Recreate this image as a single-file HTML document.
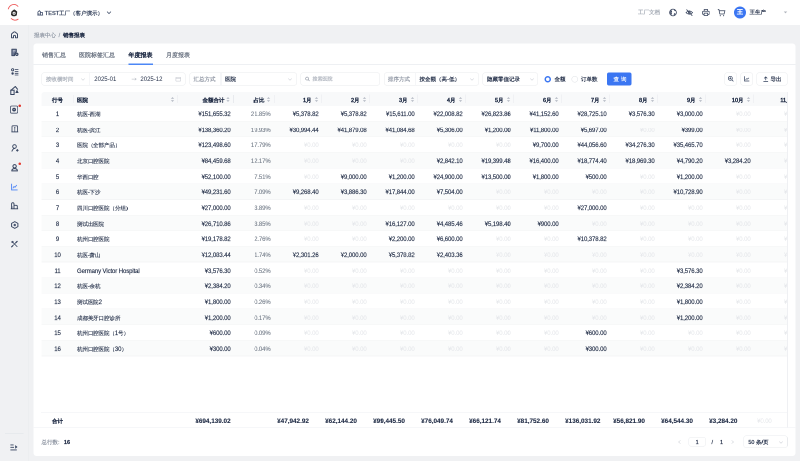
<!DOCTYPE html><html><head><meta charset="utf-8"><style>*{box-sizing:border-box}
html,body{margin:0;padding:0}
body{position:relative;background:#f0f1f3;font-family:"Liberation Sans",sans-serif;color:#1f2b45}
.abs{position:absolute}
.t{position:absolute;white-space:nowrap;line-height:20px;font-size:11.5px}
.t.c{transform:translateX(-50%)}
.hd{font-weight:bold;color:#25314a}
.dk{color:#1f2b45}
.gy{color:#9098a5}
.zr{color:#d9dde3}
.sm{font-weight:bold;color:#1f2b45}
.sort{position:absolute}
.sep{position:absolute;width:1.2px;background:#e8eaee}
.tbl{position:absolute;left:0;top:0;width:1574px;height:922px;overflow:hidden}
.th{position:absolute;left:82.8px;width:1520px;background:#f8f9fa;border-radius:6px 0 0 0}
.rowbg{position:absolute;left:82.8px;width:1520px;background:#fafbfb}
.hl{position:absolute;height:1.2px;background:#eceef2}
.vl{position:absolute;width:1.2px;background:#eff0f3}
.hdr{position:absolute;left:0;top:0;width:1600px;height:50px;background:#fff}
.side{position:absolute;left:0;top:50px;width:57px;height:872px;border-right:1.2px solid #e9eaed}
.card{position:absolute;left:67.2px;top:86.6px;width:1524px;height:825px;background:#fff;border-radius:6px}
.tab{position:absolute;top:100px;font-size:12.2px;line-height:20px;color:#5f6878;white-space:nowrap}
.tab.on{color:#1f2b45}
.box{position:absolute;border:1.2px solid #e9ebee;border-radius:5px;background:#fff}
.ft{position:absolute;white-space:nowrap;line-height:20px;font-size:11.8px}
.t .cj{font-size:10.7px;-webkit-text-stroke:0.24px currentColor}
.hd .cj, .sm .cj{font-size:10.6px}
.t.hd{font-size:11px}
.t.dk{-webkit-text-stroke:0.28px #1f2b45}
.tab,.ft{-webkit-text-stroke:0.4px currentColor}
.t.sm{font-size:12.7px;-webkit-text-stroke:0.2px #1f2b45}
.t.sm .cj{font-size:11.2px}
.t.gy{color:#78808d}
.t.zr{color:#dde0e5}

.rowln{position:absolute;left:82.8px;width:1520px;height:1.4px;background:#f4f5f6}
.t.dk,.t.gy,.t.zr{font-size:12px;letter-spacing:-0.2px}
.t.dk .cj{letter-spacing:0}
.t.zr{color:#e3e5e9}

.t.hd{font-weight:normal;-webkit-text-stroke:0.84px #222e47;color:#222e47}
.t.hd .cj{-webkit-text-stroke:0.8px #222e47}
.t.dk .cj{letter-spacing:-0.18px}

.tab.on{-webkit-text-stroke:0.84px #1f2b45}
.t.gy{-webkit-text-stroke:0.24px #78808d}
html,body{width:800px;height:461px;overflow:hidden}#root{will-change:transform;position:absolute;left:0;top:0;width:1600px;height:922px;transform:scale(0.5);transform-origin:0 0;overflow:hidden}</style></head><body><div id="root">
<div class="hdr">
  <!-- logo -->
  <svg class="abs" style="left:8px;top:4px" width="40" height="40" viewBox="0 0 20 20">
    <path d="M4.2 7.2 A6 7 0 0 1 14.2 4.6" fill="none" stroke="#ef5b5b" stroke-width="0.9"/>
    <path d="M14.4 17 A6 7 0 0 1 7 16.3" fill="none" stroke="#ef5b5b" stroke-width="0.9"/>
    <path d="M7.3 9.8 L9 8.2 L10.2 7.4 L11.6 8.3 L13.2 9.6 L12.8 13.4 L11 14.2 L8.8 14.2 L7 13 Z" fill="#2a2a2a"/>
    <circle cx="10.1" cy="11.2" r="1.5" fill="#fff"/>
    <circle cx="10.1" cy="11.2" r="0.6" fill="#2a2a2a"/>
  </svg>
  <svg class="abs" style="left:74px;top:19.6px" width="13" height="11" viewBox="0 0 6.5 5.5"><path d="M0.4 5.1 H6.1 M0.9 5.1 V2 L2.4 0.6 L3.4 1.6 V5.1 M3.4 2.6 H5.6 V5.1 M2 3.2 V5" fill="none" stroke="#3a4866" stroke-width="0.75"/></svg>
  <div class="ft" style="left:89.6px;top:16px;font-size:11.2px;color:#2c3a55">TEST工厂（客户演示）</div>
  <svg class="abs" style="left:213px;top:21.6px" width="10" height="7" viewBox="0 0 5 3.5"><path d="M0.6 0.6 L2.5 2.6 L4.4 0.6" fill="none" stroke="#3c4a66" stroke-width="0.8"/></svg>

  <div class="ft" style="left:1276px;top:14px;font-size:11.2px;color:#a6acb6">工厂文档</div>
  <!-- globe -->
  <svg class="abs" style="left:1338.4px;top:17.2px" width="16" height="16" viewBox="0 0 8 8"><circle cx="4" cy="4" r="3.4" fill="none" stroke="#34405a" stroke-width="0.75"/><path d="M1.8 1.8 Q3.2 2 3 3 Q2.3 3.5 2.7 4.5 Q3.1 5.3 2.6 6.4 L1.3 5.2 Q0.9 3.4 1.8 1.8Z M4.9 1 L5.3 2.2 L6.9 2.6 Q6.4 1.4 4.9 1Z M5.2 4.8 Q6 4.7 6.5 5.3 Q5.8 6.3 4.8 6.7 Q4.7 5.6 5.2 4.8Z" fill="#34405a"/></svg>
  <!-- eye slash -->
  <svg class="abs" style="left:1371.2px;top:17.6px" width="15.2" height="14.4" viewBox="0 0 7.6 7.2"><path d="M0.5 3.6 Q3.8 0.2 7.1 3.6 Q3.8 7 0.5 3.6Z" fill="none" stroke="#34405a" stroke-width="0.7"/><circle cx="3.8" cy="3.6" r="1" fill="none" stroke="#34405a" stroke-width="0.65"/><path d="M1 0.5 L6.8 6.8" stroke="#34405a" stroke-width="0.8"/></svg>
  <!-- printer -->
  <svg class="abs" style="left:1403.6px;top:17.6px" width="15.6" height="14" viewBox="0 0 7.8 7"><path d="M2.2 2.2 V0.5 H5.6 V2.2 M1.9 5.4 H1.2 Q0.5 5.4 0.5 4.6 V3 Q0.5 2.2 1.4 2.2 H6.4 Q7.3 2.2 7.3 3 V4.6 Q7.3 5.4 6.6 5.4 H5.9 M2.1 4.1 H5.7 V6.5 H2.1Z" fill="none" stroke="#34405a" stroke-width="0.75"/></svg>
  <!-- cart -->
  <svg class="abs" style="left:1435.2px;top:17.6px" width="16" height="15.2" viewBox="0 0 8 7.6"><path d="M0.3 0.5 H1.4 L2.3 5 H6.6 L7.4 1.8 H1.8" fill="none" stroke="#34405a" stroke-width="0.75"/><circle cx="2.8" cy="6.7" r="0.55" fill="#34405a"/><circle cx="6.1" cy="6.7" r="0.55" fill="#34405a"/></svg>
  <div class="abs" style="left:1468px;top:12.8px;width:24px;height:24px;border-radius:50%;background:#3b76f2"></div>
  <div class="ft" style="left:1474px;top:14px;font-size:12px;color:#fff;font-weight:bold">王</div>
  <div class="ft" style="left:1499.2px;top:14px;font-size:11.2px;color:#25314a;-webkit-text-stroke:0.44px #25314a">王生产</div>
  <svg class="abs" style="left:1567px;top:22.4px" width="8" height="6" viewBox="0 0 4 3"><path d="M0.3 0.5 L2 2.4 L3.7 0.5Z" fill="#b0b5bd"/></svg>
</div>

<div class="side">
</div>
<!-- sidebar icons -->
<svg class="abs" style="left:20.6px;top:61.8px" width="16" height="16" viewBox="0 0 8 8"><path d="M1 6.8 V3.4 Q1 2.9 1.5 2.5 L3.4 1 Q4 0.6 4.6 1 L6.5 2.5 Q7 2.9 7 3.4 V6.8 H5 V5.4 Q5 4.3 4 4.3 Q3 4.3 3 5.4 V6.8Z" fill="none" stroke="#34425e" stroke-width="0.95" stroke-linejoin="round"/></svg>
<svg class="abs" style="left:21.6px;top:97px" width="16" height="16" viewBox="0 0 8 8"><path d="M0.8 0.6 H5.4 V3.6 Q3.4 4.2 3.6 7.2 H0.8Z" fill="#6b7690" stroke="#34425e" stroke-width="0.8" stroke-linejoin="round"/><path d="M1.9 2 H4.3 M1.9 3.4 H3.6" stroke="#e8eaef" stroke-width="0.55"/><circle cx="5.8" cy="5.8" r="1.7" fill="#34425e"/><circle cx="5.8" cy="5.8" r="0.55" fill="#eef0f3"/></svg>
<svg class="abs" style="left:21.6px;top:135.6px" width="16" height="16" viewBox="0 0 8 8"><circle cx="1.6" cy="1.8" r="1.1" fill="none" stroke="#34425e" stroke-width="0.9"/><circle cx="1.6" cy="5.5" r="1.2" fill="#34425e"/><path d="M3.8 1.5 H7.4 M3.8 3.5 H7.4 M3.8 5.3 H7.4 M3.8 7 H7.4" stroke="#34425e" stroke-width="0.8"/></svg>
<svg class="abs" style="left:20px;top:172px" width="20" height="18" viewBox="0 0 10 9"><rect x="0.8" y="4.2" width="3.3" height="4.3" fill="none" stroke="#34425e" stroke-width="1"/><path d="M0.6 4.6 L5.3 0.5 L7.8 3.6" fill="none" stroke="#34425e" stroke-width="1" stroke-linejoin="round"/><path d="M5.3 7 L7 3.6 L8.7 7Z" fill="#34425e"/></svg>
<svg class="abs" style="left:20px;top:211.2px" width="16.4" height="16.4" viewBox="0 0 8.2 8.2"><rect x="0.5" y="0.5" width="7.2" height="7.2" rx="1.2" fill="none" stroke="#4a566e" stroke-width="0.85"/><circle cx="4.1" cy="4.1" r="1.9" fill="#3a4660"/><path d="M3.3 4.1 H4.9" stroke="#dfe2e8" stroke-width="0.5"/></svg>
<div class="abs" style="left:37px;top:209.2px;width:5.2px;height:5.2px;border-radius:50%;background:#e0352b"></div>
<svg class="abs" style="left:21.6px;top:249.6px" width="15.2" height="15.2" viewBox="0 0 7.6 7.6"><path d="M1 6.9 V1.6 Q1 0.8 1.8 0.8 H5.8 Q6.6 0.8 6.6 1.6 V6.9" fill="none" stroke="#3a4660" stroke-width="0.85"/><path d="M0.4 6.9 H7.2" stroke="#34425e" stroke-width="0.9"/><path d="M3.8 2.2 V6.6" stroke="#4a566e" stroke-width="0.75"/><circle cx="3.8" cy="2.6" r="0.6" fill="#34425e"/></svg>
<svg class="abs" style="left:22px;top:288px" width="16" height="16" viewBox="0 0 8 8"><circle cx="3.5" cy="2.5" r="1.8" fill="none" stroke="#34425e" stroke-width="0.9"/><path d="M0.8 7.5 Q1.8 4.5 4 4.3" fill="none" stroke="#34425e" stroke-width="0.9"/><path d="M5 6.3 H7.6 M6.3 5 V7.6" stroke="#34425e" stroke-width="0.9"/></svg>
<svg class="abs" style="left:22px;top:328px" width="16" height="16" viewBox="0 0 8 8"><circle cx="3.6" cy="2.3" r="1.7" fill="none" stroke="#34425e" stroke-width="0.95"/><path d="M0.8 6.9 Q0.8 4.6 3.6 4.6 Q6.4 4.6 6.4 6.9Z" fill="none" stroke="#34425e" stroke-width="0.95"/></svg>
<div class="abs" style="left:37.4px;top:324.8px;width:5px;height:5px;border-radius:50%;background:#e5392f"></div>
<svg class="abs" style="left:21.6px;top:367px" width="14" height="14" viewBox="0 0 7 7"><path d="M0.6 0.3 V6.4 H6.6" fill="none" stroke="#4a82f5" stroke-width="0.9"/><path d="M1.8 4.8 L3 3 L4 3.8 L5.8 1.5" fill="none" stroke="#4a82f5" stroke-width="0.8"/></svg>
<svg class="abs" style="left:21.2px;top:404px" width="16" height="15" viewBox="0 0 8 7.5"><path d="M0.3 6.8 H7.6" stroke="#34425e" stroke-width="0.9"/><path d="M1.1 6.8 V2 Q1.1 0.7 2.3 0.7 Q3.5 0.7 3.5 2 V6.8 M3.5 3.3 H5.8 Q6.8 3.3 6.8 4.3 V6.8" fill="none" stroke="#34425e" stroke-width="0.9"/><path d="M2.3 4.2 V6.4" stroke="#6b7690" stroke-width="0.5"/></svg>
<svg class="abs" style="left:21.6px;top:442px" width="15" height="16" viewBox="0 0 7.5 8"><path d="M3.75 0.6 L6.9 2.4 V5.6 L3.75 7.4 L0.6 5.6 V2.4Z" fill="none" stroke="#34425e" stroke-width="0.95" stroke-linejoin="round"/><circle cx="3.75" cy="4" r="1.25" fill="#5d6880"/><circle cx="3.75" cy="4" r="0.6" fill="#34425e"/></svg>
<svg class="abs" style="left:21px;top:480px" width="16" height="16" viewBox="0 0 8 8"><path d="M1.3 6.7 L6.6 1.4" stroke="#34425e" stroke-width="0.6"/><path d="M5.3 2.7 L6.6 1.4" stroke="#34425e" stroke-width="1.2" stroke-linecap="round"/><path d="M1.1 6.9 L2.3 5.7" stroke="#34425e" stroke-width="1.1" stroke-linecap="round"/><path d="M2.4 2.4 L6.6 6.6" stroke="#34425e" stroke-width="0.8" stroke-linecap="round"/><circle cx="2" cy="2" r="1.15" fill="#4a5670"/></svg>
<div class="abs" style="left:10px;top:866px;width:37.2px;height:1.2px;background:#dfe2e6"></div>
<svg class="abs" style="left:20px;top:887px" width="16" height="15" viewBox="0 0 8 7.5"><path d="M0.4 1.4 H3.6 M0.4 3.8 H4 M0.4 6.4 H6.8" fill="none" stroke="#34425e" stroke-width="0.85"/><path d="M5.2 1.6 L7.5 3.5 L5.2 5.3Z" fill="#34425e"/></svg>

<div class="ft" style="left:68px;top:60px;font-size:10.8px;color:#8f97a4">报表中心</div>
<div class="ft" style="left:117.2px;top:60px;font-size:10.8px;color:#8f97a4">/</div>
<div class="ft" style="left:126px;top:60px;font-size:10.8px;color:#1f2b45;-webkit-text-stroke:0.76px #1f2b45">销售报表</div>

<div class="card"></div>
<div class="tab" style="left:83.8px">销售汇总</div>
<div class="tab" style="left:158px">医院标签汇总</div>
<div class="tab on" style="left:257px">年度报表</div>
<div class="tab" style="left:332.4px">月度报表</div>
<div class="abs" style="left:67.2px;top:128.4px;width:1524px;height:1.2px;background:#eef0f3"></div>
<div class="abs" style="left:257px;top:127.2px;width:49px;height:2.6px;background:#4c87f6"></div>

<!-- filters -->
<div class="box" style="left:83.2px;top:145.2px;width:288px;height:25.6px"></div>
<div class="abs" style="left:178.8px;top:145.2px;width:1.2px;height:25.6px;background:#eceef1"></div>
<div class="ft" style="left:92px;top:148px;font-size:10.8px;color:#a9afb9">按收横时间</div>
<svg class="abs" style="left:161.6px;top:155.6px" width="8" height="6" viewBox="0 0 4 3"><path d="M0.3 0.5 L2 2.3 L3.7 0.5" fill="none" stroke="#b5bac3" stroke-width="0.5"/></svg>
<div class="ft" style="left:188.6px;top:148px;font-size:12px;color:#1f2b45;-webkit-text-stroke:0">2025-01</div>
<svg class="abs" style="left:263.2px;top:154.8px" width="10.4" height="6.4" viewBox="0 0 5.2 3.2"><path d="M0.2 1.6 H4.8 M3.3 0.4 L4.8 1.6 L3.3 2.8" fill="none" stroke="#aab0ba" stroke-width="0.5"/></svg>
<div class="ft" style="left:280.8px;top:148px;font-size:12px;color:#1f2b45;-webkit-text-stroke:0">2025-12</div>
<svg class="abs" style="left:351px;top:153px" width="11" height="10" viewBox="0 0 5.5 5"><path d="M0.4 0.8 H5.1 V4.6 H0.4Z M0.4 1.9 H5.1" fill="none" stroke="#c0c4cc" stroke-width="0.5"/></svg>

<div class="box" style="left:378.6px;top:145.2px;width:215.4px;height:25.6px"></div>
<div class="abs" style="left:441.4px;top:145.2px;width:1.2px;height:25.6px;background:#eceef1"></div>
<div class="ft" style="left:387.4px;top:148px;font-size:10.8px;color:#8f96a3">汇总方式</div>
<div class="ft" style="left:450px;top:148px;font-size:10.8px;color:#1f2b45">医院</div>
<svg class="abs" style="left:576.4px;top:155.6px" width="8" height="6" viewBox="0 0 4 3"><path d="M0.3 0.5 L2 2.3 L3.7 0.5" fill="none" stroke="#b5bac3" stroke-width="0.5"/></svg>

<div class="box" style="left:601px;top:145.2px;width:159px;height:25.6px"></div>
<svg class="abs" style="left:610px;top:153.2px" width="10" height="10" viewBox="0 0 5 5"><circle cx="2.1" cy="2.1" r="1.5" fill="none" stroke="#8f96a3" stroke-width="0.6"/><path d="M3.2 3.2 L4.6 4.6" stroke="#8f96a3" stroke-width="0.6"/></svg>
<div class="ft" style="left:625px;top:148px;font-size:10.4px;color:#b5bac3">搜索医院</div>

<div class="box" style="left:767.8px;top:145.2px;width:190px;height:25.6px"></div>
<div class="abs" style="left:830px;top:145.2px;width:1.2px;height:25.6px;background:#eceef1"></div>
<div class="ft" style="left:776px;top:148px;font-size:10.8px;color:#8f96a3">排序方式</div>
<div class="ft" style="left:839.2px;top:148px;font-size:10.8px;color:#1f2b45">按金额（高-低）</div>
<svg class="abs" style="left:940.4px;top:155.6px" width="8" height="6" viewBox="0 0 4 3"><path d="M0.3 0.5 L2 2.3 L3.7 0.5" fill="none" stroke="#b5bac3" stroke-width="0.5"/></svg>

<div class="box" style="left:964.6px;top:145.2px;width:111.4px;height:25.6px"></div>
<div class="ft" style="left:974px;top:148px;font-size:10.8px;color:#1f2b45">隐藏零值记录</div>
<svg class="abs" style="left:1060.4px;top:155.6px" width="8" height="6" viewBox="0 0 4 3"><path d="M0.3 0.5 L2 2.3 L3.7 0.5" fill="none" stroke="#b5bac3" stroke-width="0.5"/></svg>

<div class="abs" style="left:1089.2px;top:151.7px;width:13px;height:13px;border-radius:50%;border:3.8px solid #3b76f2;background:#fff"></div>
<div class="ft" style="left:1109.2px;top:148px;font-size:10.6px;color:#1f2b45">金额</div>
<div class="abs" style="left:1143px;top:151.7px;width:13px;height:13px;border-radius:50%;border:1.2px solid #dcdfe4;background:#fff"></div>
<div class="ft" style="left:1161.8px;top:148px;font-size:10.6px;color:#1f2b45">订单数</div>
<div class="abs" style="left:1214.4px;top:145.2px;width:48.2px;height:25.4px;border-radius:4px;background:#3b76f2"></div>
<div class="ft" style="left:1227.2px;top:148px;font-size:11.4px;color:#fff;-webkit-text-stroke:0.3px #fff;letter-spacing:0.2px">查 询</div>

<div class="box" style="left:1448.8px;top:144.6px;width:25.4px;height:26.6px"></div>
<svg class="abs" style="left:1455px;top:151.2px" width="13" height="13" viewBox="0 0 6.5 6.5"><circle cx="2.8" cy="2.8" r="2" fill="none" stroke="#34425e" stroke-width="0.7"/><path d="M4.3 4.3 L5.9 5.9 M1.8 2.8 H3.8 M2.8 1.8 V3.8" stroke="#34425e" stroke-width="0.7"/></svg>
<div class="box" style="left:1480.5px;top:144.6px;width:25.7px;height:26.6px"></div>
<svg class="abs" style="left:1488px;top:152px" width="11" height="11" viewBox="0 0 5.5 5.5"><path d="M0.5 0.2 V5 H5.3" fill="none" stroke="#34425e" stroke-width="0.7"/><path d="M1.5 3.8 L2.8 2.6 L3.5 3.1 L5 1.8" fill="none" stroke="#34425e" stroke-width="0.6"/></svg>
<div class="box" style="left:1513px;top:144.6px;width:61.5px;height:26.6px"></div>
<svg class="abs" style="left:1526px;top:151.6px" width="11" height="12" viewBox="0 0 5.5 6"><path d="M2.75 4.2 V1 M1.2 2.4 L2.75 0.9 L4.3 2.4 M0.4 5.4 H5.1" fill="none" stroke="#34425e" stroke-width="0.7"/></svg>
<div class="ft" style="left:1541.2px;top:148px;font-size:10.6px;color:#1f2b45">导出</div>

<div class="tbl">
<div class="th" style="top:184px;height:28px"></div>
<div class="t c hd" style="left:115px;top:190px"><span class="cj">行号</span></div>
<div class="sep" style="left:146.2px;top:190px;height:16px"></div>
<div class="t hd" style="left:154px;top:190px"><span class="cj">医院</span></div>
<svg class="sort" style="left:340.6px;top:192px" width="8" height="12" viewBox="0 0 4 6"><path d="M0.4 2.9 L2 1.0 L3.6 2.9Z" fill="#b9bec7"/><path d="M0.4 4.1 L2 6.0 L3.6 4.1Z" fill="#b9bec7"/></svg>
<div class="sep" style="left:355px;top:190px;height:16px"></div>
<div class="t r hd" style="right:1125.4px;top:190px"><span class="cj">金额合计</span></div>
<svg class="sort" style="left:452px;top:192px" width="8" height="12" viewBox="0 0 4 6"><path d="M0.4 2.9 L2 1.0 L3.6 2.9Z" fill="#b9bec7"/><path d="M0.4 4.1 L2 6.0 L3.6 4.1Z" fill="#b9bec7"/></svg>
<div class="sep" style="left:466.4px;top:190px;height:16px"></div>
<div class="t r hd" style="right:1045.4px;top:190px"><span class="cj">占比</span></div>
<svg class="sort" style="left:532.6px;top:192px" width="8" height="12" viewBox="0 0 4 6"><path d="M0.4 2.9 L2 1.0 L3.6 2.9Z" fill="#b9bec7"/><path d="M0.4 4.1 L2 6.0 L3.6 4.1Z" fill="#b9bec7"/></svg>
<div class="sep" style="left:547.5px;top:190px;height:16px"></div>
<div class="t r hd" style="right:950.9px;top:190px">1<span class="cj">月</span></div>
<svg class="sort" style="left:628.7px;top:192px" width="8" height="12" viewBox="0 0 4 6"><path d="M0.4 2.9 L2 1.0 L3.6 2.9Z" fill="#b9bec7"/><path d="M0.4 4.1 L2 6.0 L3.6 4.1Z" fill="#b9bec7"/></svg>
<div class="sep" style="left:642.9px;top:189.4px;height:17px"></div>
<div class="t r hd" style="right:854.9px;top:190px">2<span class="cj">月</span></div>
<svg class="sort" style="left:724.7px;top:192px" width="8" height="12" viewBox="0 0 4 6"><path d="M0.4 2.9 L2 1.0 L3.6 2.9Z" fill="#b9bec7"/><path d="M0.4 4.1 L2 6.0 L3.6 4.1Z" fill="#b9bec7"/></svg>
<div class="sep" style="left:738.9px;top:189.4px;height:17px"></div>
<div class="t r hd" style="right:758.9px;top:190px">3<span class="cj">月</span></div>
<svg class="sort" style="left:820.7px;top:192px" width="8" height="12" viewBox="0 0 4 6"><path d="M0.4 2.9 L2 1.0 L3.6 2.9Z" fill="#b9bec7"/><path d="M0.4 4.1 L2 6.0 L3.6 4.1Z" fill="#b9bec7"/></svg>
<div class="sep" style="left:834.9px;top:189.4px;height:17px"></div>
<div class="t r hd" style="right:662.9px;top:190px">4<span class="cj">月</span></div>
<svg class="sort" style="left:916.7px;top:192px" width="8" height="12" viewBox="0 0 4 6"><path d="M0.4 2.9 L2 1.0 L3.6 2.9Z" fill="#b9bec7"/><path d="M0.4 4.1 L2 6.0 L3.6 4.1Z" fill="#b9bec7"/></svg>
<div class="sep" style="left:930.9px;top:189.4px;height:17px"></div>
<div class="t r hd" style="right:566.9px;top:190px">5<span class="cj">月</span></div>
<svg class="sort" style="left:1012.7px;top:192px" width="8" height="12" viewBox="0 0 4 6"><path d="M0.4 2.9 L2 1.0 L3.6 2.9Z" fill="#b9bec7"/><path d="M0.4 4.1 L2 6.0 L3.6 4.1Z" fill="#b9bec7"/></svg>
<div class="sep" style="left:1026.9px;top:189.4px;height:17px"></div>
<div class="t r hd" style="right:470.9px;top:190px">6<span class="cj">月</span></div>
<svg class="sort" style="left:1108.7px;top:192px" width="8" height="12" viewBox="0 0 4 6"><path d="M0.4 2.9 L2 1.0 L3.6 2.9Z" fill="#b9bec7"/><path d="M0.4 4.1 L2 6.0 L3.6 4.1Z" fill="#b9bec7"/></svg>
<div class="sep" style="left:1122.9px;top:189.4px;height:17px"></div>
<div class="t r hd" style="right:374.9px;top:190px">7<span class="cj">月</span></div>
<svg class="sort" style="left:1204.7px;top:192px" width="8" height="12" viewBox="0 0 4 6"><path d="M0.4 2.9 L2 1.0 L3.6 2.9Z" fill="#b9bec7"/><path d="M0.4 4.1 L2 6.0 L3.6 4.1Z" fill="#b9bec7"/></svg>
<div class="sep" style="left:1218.9px;top:189.4px;height:17px"></div>
<div class="t r hd" style="right:278.9px;top:190px">8<span class="cj">月</span></div>
<svg class="sort" style="left:1300.7px;top:192px" width="8" height="12" viewBox="0 0 4 6"><path d="M0.4 2.9 L2 1.0 L3.6 2.9Z" fill="#b9bec7"/><path d="M0.4 4.1 L2 6.0 L3.6 4.1Z" fill="#b9bec7"/></svg>
<div class="sep" style="left:1314.9px;top:189.4px;height:17px"></div>
<div class="t r hd" style="right:182.9px;top:190px">9<span class="cj">月</span></div>
<svg class="sort" style="left:1396.7px;top:192px" width="8" height="12" viewBox="0 0 4 6"><path d="M0.4 2.9 L2 1.0 L3.6 2.9Z" fill="#b9bec7"/><path d="M0.4 4.1 L2 6.0 L3.6 4.1Z" fill="#b9bec7"/></svg>
<div class="sep" style="left:1410.9px;top:189.4px;height:17px"></div>
<div class="t r hd" style="right:86.9px;top:190px">10<span class="cj">月</span></div>
<svg class="sort" style="left:1492.7px;top:192px" width="8" height="12" viewBox="0 0 4 6"><path d="M0.4 2.9 L2 1.0 L3.6 2.9Z" fill="#b9bec7"/><path d="M0.4 4.1 L2 6.0 L3.6 4.1Z" fill="#b9bec7"/></svg>
<div class="sep" style="left:1506.9px;top:189.4px;height:17px"></div>
<div class="t r hd" style="right:-9.1px;top:190px">11<span class="cj">月</span></div>
<svg class="sort" style="left:1588.7px;top:192px" width="8" height="12" viewBox="0 0 4 6"><path d="M0.4 2.9 L2 1.0 L3.6 2.9Z" fill="#b9bec7"/><path d="M0.4 4.1 L2 6.0 L3.6 4.1Z" fill="#b9bec7"/></svg>
<div class="sep" style="left:1602.9px;top:189.4px;height:17px"></div>
<div class="rowln" style="top:241.7px"></div>
<div class="t c dk" style="left:115px;top:218px">1</div>
<div class="t dk" style="left:154px;top:218px"><span class="cj">杭医</span>-<span class="cj">西湖</span></div>
<div class="t r dk" style="right:1112.8px;top:218px">¥151,655.32</div>
<div class="t r gy" style="right:1032.8px;top:218px">21.85%</div>
<div class="t r dk" style="right:936.9px;top:218px">¥5,378.82</div>
<div class="t r dk" style="right:840.9px;top:218px">¥5,378.82</div>
<div class="t r dk" style="right:744.9px;top:218px">¥15,611.00</div>
<div class="t r dk" style="right:648.9px;top:218px">¥22,008.82</div>
<div class="t r dk" style="right:552.9px;top:218px">¥26,823.86</div>
<div class="t r dk" style="right:456.9px;top:218px">¥41,152.60</div>
<div class="t r dk" style="right:360.9px;top:218px">¥28,725.10</div>
<div class="t r dk" style="right:264.9px;top:218px">¥3,576.30</div>
<div class="t r dk" style="right:168.9px;top:218px">¥3,000.00</div>
<div class="t r zr" style="right:72.9px;top:218px">¥0.00</div>
<div class="t r zr" style="right:-23.1px;top:218px">¥0.00</div>
<div class="rowbg" style="top:242.7px;height:31.3px"></div>
<div class="rowln" style="top:273px"></div>
<div class="t c dk" style="left:115px;top:250px">2</div>
<div class="t dk" style="left:154px;top:250px"><span class="cj">杭医</span>-<span class="cj">滨江</span></div>
<div class="t r dk" style="right:1112.8px;top:250px">¥138,360.20</div>
<div class="t r gy" style="right:1032.8px;top:250px">19.93%</div>
<div class="t r dk" style="right:936.9px;top:250px">¥30,994.44</div>
<div class="t r dk" style="right:840.9px;top:250px">¥41,879.08</div>
<div class="t r dk" style="right:744.9px;top:250px">¥41,084.68</div>
<div class="t r dk" style="right:648.9px;top:250px">¥5,306.00</div>
<div class="t r dk" style="right:552.9px;top:250px">¥1,200.00</div>
<div class="t r dk" style="right:456.9px;top:250px">¥11,800.00</div>
<div class="t r dk" style="right:360.9px;top:250px">¥5,697.00</div>
<div class="t r zr" style="right:264.9px;top:250px">¥0.00</div>
<div class="t r dk" style="right:168.9px;top:250px">¥399.00</div>
<div class="t r zr" style="right:72.9px;top:250px">¥0.00</div>
<div class="t r zr" style="right:-23.1px;top:250px">¥0.00</div>
<div class="rowln" style="top:304.3px"></div>
<div class="t c dk" style="left:115px;top:280px">3</div>
<div class="t dk" style="left:154px;top:280px"><span class="cj">医院（全部产品）</span></div>
<div class="t r dk" style="right:1112.8px;top:280px">¥123,498.60</div>
<div class="t r gy" style="right:1032.8px;top:280px">17.79%</div>
<div class="t r zr" style="right:936.9px;top:280px">¥0.00</div>
<div class="t r zr" style="right:840.9px;top:280px">¥0.00</div>
<div class="t r zr" style="right:744.9px;top:280px">¥0.00</div>
<div class="t r zr" style="right:648.9px;top:280px">¥0.00</div>
<div class="t r zr" style="right:552.9px;top:280px">¥0.00</div>
<div class="t r dk" style="right:456.9px;top:280px">¥9,700.00</div>
<div class="t r dk" style="right:360.9px;top:280px">¥44,056.60</div>
<div class="t r dk" style="right:264.9px;top:280px">¥34,276.30</div>
<div class="t r dk" style="right:168.9px;top:280px">¥35,465.70</div>
<div class="t r zr" style="right:72.9px;top:280px">¥0.00</div>
<div class="t r zr" style="right:-23.1px;top:280px">¥0.00</div>
<div class="rowbg" style="top:305.3px;height:31.3px"></div>
<div class="rowln" style="top:335.6px"></div>
<div class="t c dk" style="left:115px;top:312px">4</div>
<div class="t dk" style="left:154px;top:312px"><span class="cj">北京口腔医院</span></div>
<div class="t r dk" style="right:1112.8px;top:312px">¥84,459.68</div>
<div class="t r gy" style="right:1032.8px;top:312px">12.17%</div>
<div class="t r zr" style="right:936.9px;top:312px">¥0.00</div>
<div class="t r zr" style="right:840.9px;top:312px">¥0.00</div>
<div class="t r zr" style="right:744.9px;top:312px">¥0.00</div>
<div class="t r dk" style="right:648.9px;top:312px">¥2,842.10</div>
<div class="t r dk" style="right:552.9px;top:312px">¥19,399.48</div>
<div class="t r dk" style="right:456.9px;top:312px">¥16,400.00</div>
<div class="t r dk" style="right:360.9px;top:312px">¥18,774.40</div>
<div class="t r dk" style="right:264.9px;top:312px">¥18,969.30</div>
<div class="t r dk" style="right:168.9px;top:312px">¥4,790.20</div>
<div class="t r dk" style="right:72.9px;top:312px">¥3,284.20</div>
<div class="t r zr" style="right:-23.1px;top:312px">¥0.00</div>
<div class="rowln" style="top:366.9px"></div>
<div class="t c dk" style="left:115px;top:344px">5</div>
<div class="t dk" style="left:154px;top:344px"><span class="cj">华西口腔</span></div>
<div class="t r dk" style="right:1112.8px;top:344px">¥52,100.00</div>
<div class="t r gy" style="right:1032.8px;top:344px">7.51%</div>
<div class="t r zr" style="right:936.9px;top:344px">¥0.00</div>
<div class="t r dk" style="right:840.9px;top:344px">¥9,000.00</div>
<div class="t r dk" style="right:744.9px;top:344px">¥1,200.00</div>
<div class="t r dk" style="right:648.9px;top:344px">¥24,900.00</div>
<div class="t r dk" style="right:552.9px;top:344px">¥13,500.00</div>
<div class="t r dk" style="right:456.9px;top:344px">¥1,800.00</div>
<div class="t r dk" style="right:360.9px;top:344px">¥500.00</div>
<div class="t r zr" style="right:264.9px;top:344px">¥0.00</div>
<div class="t r dk" style="right:168.9px;top:344px">¥1,200.00</div>
<div class="t r zr" style="right:72.9px;top:344px">¥0.00</div>
<div class="t r zr" style="right:-23.1px;top:344px">¥0.00</div>
<div class="rowbg" style="top:367.9px;height:31.3px"></div>
<div class="rowln" style="top:398.2px"></div>
<div class="t c dk" style="left:115px;top:374px">6</div>
<div class="t dk" style="left:154px;top:374px"><span class="cj">杭医</span>-<span class="cj">下沙</span></div>
<div class="t r dk" style="right:1112.8px;top:374px">¥49,231.60</div>
<div class="t r gy" style="right:1032.8px;top:374px">7.09%</div>
<div class="t r dk" style="right:936.9px;top:374px">¥9,268.40</div>
<div class="t r dk" style="right:840.9px;top:374px">¥3,886.30</div>
<div class="t r dk" style="right:744.9px;top:374px">¥17,844.00</div>
<div class="t r dk" style="right:648.9px;top:374px">¥7,504.00</div>
<div class="t r zr" style="right:552.9px;top:374px">¥0.00</div>
<div class="t r zr" style="right:456.9px;top:374px">¥0.00</div>
<div class="t r zr" style="right:360.9px;top:374px">¥0.00</div>
<div class="t r zr" style="right:264.9px;top:374px">¥0.00</div>
<div class="t r dk" style="right:168.9px;top:374px">¥10,728.90</div>
<div class="t r zr" style="right:72.9px;top:374px">¥0.00</div>
<div class="t r zr" style="right:-23.1px;top:374px">¥0.00</div>
<div class="rowln" style="top:429.5px"></div>
<div class="t c dk" style="left:115px;top:406px">7</div>
<div class="t dk" style="left:154px;top:406px"><span class="cj">四川口腔医院（分组）</span></div>
<div class="t r dk" style="right:1112.8px;top:406px">¥27,000.00</div>
<div class="t r gy" style="right:1032.8px;top:406px">3.89%</div>
<div class="t r zr" style="right:936.9px;top:406px">¥0.00</div>
<div class="t r zr" style="right:840.9px;top:406px">¥0.00</div>
<div class="t r zr" style="right:744.9px;top:406px">¥0.00</div>
<div class="t r zr" style="right:648.9px;top:406px">¥0.00</div>
<div class="t r zr" style="right:552.9px;top:406px">¥0.00</div>
<div class="t r zr" style="right:456.9px;top:406px">¥0.00</div>
<div class="t r dk" style="right:360.9px;top:406px">¥27,000.00</div>
<div class="t r zr" style="right:264.9px;top:406px">¥0.00</div>
<div class="t r zr" style="right:168.9px;top:406px">¥0.00</div>
<div class="t r zr" style="right:72.9px;top:406px">¥0.00</div>
<div class="t r zr" style="right:-23.1px;top:406px">¥0.00</div>
<div class="rowbg" style="top:430.5px;height:31.3px"></div>
<div class="rowln" style="top:460.8px"></div>
<div class="t c dk" style="left:115px;top:438px">8</div>
<div class="t dk" style="left:154px;top:438px"><span class="cj">测试出医院</span></div>
<div class="t r dk" style="right:1112.8px;top:438px">¥26,710.86</div>
<div class="t r gy" style="right:1032.8px;top:438px">3.85%</div>
<div class="t r zr" style="right:936.9px;top:438px">¥0.00</div>
<div class="t r zr" style="right:840.9px;top:438px">¥0.00</div>
<div class="t r dk" style="right:744.9px;top:438px">¥16,127.00</div>
<div class="t r dk" style="right:648.9px;top:438px">¥4,485.46</div>
<div class="t r dk" style="right:552.9px;top:438px">¥5,198.40</div>
<div class="t r dk" style="right:456.9px;top:438px">¥900.00</div>
<div class="t r zr" style="right:360.9px;top:438px">¥0.00</div>
<div class="t r zr" style="right:264.9px;top:438px">¥0.00</div>
<div class="t r zr" style="right:168.9px;top:438px">¥0.00</div>
<div class="t r zr" style="right:72.9px;top:438px">¥0.00</div>
<div class="t r zr" style="right:-23.1px;top:438px">¥0.00</div>
<div class="rowln" style="top:492.1px"></div>
<div class="t c dk" style="left:115px;top:468px">9</div>
<div class="t dk" style="left:154px;top:468px"><span class="cj">杭州口腔医院</span></div>
<div class="t r dk" style="right:1112.8px;top:468px">¥19,178.82</div>
<div class="t r gy" style="right:1032.8px;top:468px">2.76%</div>
<div class="t r zr" style="right:936.9px;top:468px">¥0.00</div>
<div class="t r zr" style="right:840.9px;top:468px">¥0.00</div>
<div class="t r dk" style="right:744.9px;top:468px">¥2,200.00</div>
<div class="t r dk" style="right:648.9px;top:468px">¥6,600.00</div>
<div class="t r zr" style="right:552.9px;top:468px">¥0.00</div>
<div class="t r zr" style="right:456.9px;top:468px">¥0.00</div>
<div class="t r dk" style="right:360.9px;top:468px">¥10,378.82</div>
<div class="t r zr" style="right:264.9px;top:468px">¥0.00</div>
<div class="t r zr" style="right:168.9px;top:468px">¥0.00</div>
<div class="t r zr" style="right:72.9px;top:468px">¥0.00</div>
<div class="t r zr" style="right:-23.1px;top:468px">¥0.00</div>
<div class="rowbg" style="top:493.1px;height:31.3px"></div>
<div class="rowln" style="top:523.4px"></div>
<div class="t c dk" style="left:115px;top:500px">10</div>
<div class="t dk" style="left:154px;top:500px"><span class="cj">杭医</span>-<span class="cj">萧山</span></div>
<div class="t r dk" style="right:1112.8px;top:500px">¥12,083.44</div>
<div class="t r gy" style="right:1032.8px;top:500px">1.74%</div>
<div class="t r dk" style="right:936.9px;top:500px">¥2,301.26</div>
<div class="t r dk" style="right:840.9px;top:500px">¥2,000.00</div>
<div class="t r dk" style="right:744.9px;top:500px">¥5,378.82</div>
<div class="t r dk" style="right:648.9px;top:500px">¥2,403.36</div>
<div class="t r zr" style="right:552.9px;top:500px">¥0.00</div>
<div class="t r zr" style="right:456.9px;top:500px">¥0.00</div>
<div class="t r zr" style="right:360.9px;top:500px">¥0.00</div>
<div class="t r zr" style="right:264.9px;top:500px">¥0.00</div>
<div class="t r zr" style="right:168.9px;top:500px">¥0.00</div>
<div class="t r zr" style="right:72.9px;top:500px">¥0.00</div>
<div class="t r zr" style="right:-23.1px;top:500px">¥0.00</div>
<div class="rowln" style="top:554.7px"></div>
<div class="t c dk" style="left:115px;top:532px">11</div>
<div class="t dk" style="left:154px;top:532px">Germany Victor Hospital</div>
<div class="t r dk" style="right:1112.8px;top:532px">¥3,576.30</div>
<div class="t r gy" style="right:1032.8px;top:532px">0.52%</div>
<div class="t r zr" style="right:936.9px;top:532px">¥0.00</div>
<div class="t r zr" style="right:840.9px;top:532px">¥0.00</div>
<div class="t r zr" style="right:744.9px;top:532px">¥0.00</div>
<div class="t r zr" style="right:648.9px;top:532px">¥0.00</div>
<div class="t r zr" style="right:552.9px;top:532px">¥0.00</div>
<div class="t r zr" style="right:456.9px;top:532px">¥0.00</div>
<div class="t r zr" style="right:360.9px;top:532px">¥0.00</div>
<div class="t r zr" style="right:264.9px;top:532px">¥0.00</div>
<div class="t r dk" style="right:168.9px;top:532px">¥3,576.30</div>
<div class="t r zr" style="right:72.9px;top:532px">¥0.00</div>
<div class="t r zr" style="right:-23.1px;top:532px">¥0.00</div>
<div class="rowbg" style="top:555.7px;height:31.3px"></div>
<div class="rowln" style="top:586px"></div>
<div class="t c dk" style="left:115px;top:562px">12</div>
<div class="t dk" style="left:154px;top:562px"><span class="cj">杭医</span>-<span class="cj">余杭</span></div>
<div class="t r dk" style="right:1112.8px;top:562px">¥2,384.20</div>
<div class="t r gy" style="right:1032.8px;top:562px">0.34%</div>
<div class="t r zr" style="right:936.9px;top:562px">¥0.00</div>
<div class="t r zr" style="right:840.9px;top:562px">¥0.00</div>
<div class="t r zr" style="right:744.9px;top:562px">¥0.00</div>
<div class="t r zr" style="right:648.9px;top:562px">¥0.00</div>
<div class="t r zr" style="right:552.9px;top:562px">¥0.00</div>
<div class="t r zr" style="right:456.9px;top:562px">¥0.00</div>
<div class="t r zr" style="right:360.9px;top:562px">¥0.00</div>
<div class="t r zr" style="right:264.9px;top:562px">¥0.00</div>
<div class="t r dk" style="right:168.9px;top:562px">¥2,384.20</div>
<div class="t r zr" style="right:72.9px;top:562px">¥0.00</div>
<div class="t r zr" style="right:-23.1px;top:562px">¥0.00</div>
<div class="rowln" style="top:617.3px"></div>
<div class="t c dk" style="left:115px;top:594px">13</div>
<div class="t dk" style="left:154px;top:594px"><span class="cj">测试医院</span>2</div>
<div class="t r dk" style="right:1112.8px;top:594px">¥1,800.00</div>
<div class="t r gy" style="right:1032.8px;top:594px">0.26%</div>
<div class="t r zr" style="right:936.9px;top:594px">¥0.00</div>
<div class="t r zr" style="right:840.9px;top:594px">¥0.00</div>
<div class="t r zr" style="right:744.9px;top:594px">¥0.00</div>
<div class="t r zr" style="right:648.9px;top:594px">¥0.00</div>
<div class="t r zr" style="right:552.9px;top:594px">¥0.00</div>
<div class="t r zr" style="right:456.9px;top:594px">¥0.00</div>
<div class="t r zr" style="right:360.9px;top:594px">¥0.00</div>
<div class="t r zr" style="right:264.9px;top:594px">¥0.00</div>
<div class="t r dk" style="right:168.9px;top:594px">¥1,800.00</div>
<div class="t r zr" style="right:72.9px;top:594px">¥0.00</div>
<div class="t r zr" style="right:-23.1px;top:594px">¥0.00</div>
<div class="rowbg" style="top:618.3px;height:31.3px"></div>
<div class="rowln" style="top:648.6px"></div>
<div class="t c dk" style="left:115px;top:626px">14</div>
<div class="t dk" style="left:154px;top:626px"><span class="cj">成都美牙口腔诊所</span></div>
<div class="t r dk" style="right:1112.8px;top:626px">¥1,200.00</div>
<div class="t r gy" style="right:1032.8px;top:626px">0.17%</div>
<div class="t r zr" style="right:936.9px;top:626px">¥0.00</div>
<div class="t r zr" style="right:840.9px;top:626px">¥0.00</div>
<div class="t r zr" style="right:744.9px;top:626px">¥0.00</div>
<div class="t r zr" style="right:648.9px;top:626px">¥0.00</div>
<div class="t r zr" style="right:552.9px;top:626px">¥0.00</div>
<div class="t r zr" style="right:456.9px;top:626px">¥0.00</div>
<div class="t r zr" style="right:360.9px;top:626px">¥0.00</div>
<div class="t r zr" style="right:264.9px;top:626px">¥0.00</div>
<div class="t r dk" style="right:168.9px;top:626px">¥1,200.00</div>
<div class="t r zr" style="right:72.9px;top:626px">¥0.00</div>
<div class="t r zr" style="right:-23.1px;top:626px">¥0.00</div>
<div class="rowln" style="top:679.9px"></div>
<div class="t c dk" style="left:115px;top:656px">15</div>
<div class="t dk" style="left:154px;top:656px"><span class="cj">杭州口腔医院（</span>1<span class="cj">号）</span></div>
<div class="t r dk" style="right:1112.8px;top:656px">¥600.00</div>
<div class="t r gy" style="right:1032.8px;top:656px">0.09%</div>
<div class="t r zr" style="right:936.9px;top:656px">¥0.00</div>
<div class="t r zr" style="right:840.9px;top:656px">¥0.00</div>
<div class="t r zr" style="right:744.9px;top:656px">¥0.00</div>
<div class="t r zr" style="right:648.9px;top:656px">¥0.00</div>
<div class="t r zr" style="right:552.9px;top:656px">¥0.00</div>
<div class="t r zr" style="right:456.9px;top:656px">¥0.00</div>
<div class="t r dk" style="right:360.9px;top:656px">¥600.00</div>
<div class="t r zr" style="right:264.9px;top:656px">¥0.00</div>
<div class="t r zr" style="right:168.9px;top:656px">¥0.00</div>
<div class="t r zr" style="right:72.9px;top:656px">¥0.00</div>
<div class="t r zr" style="right:-23.1px;top:656px">¥0.00</div>
<div class="rowbg" style="top:680.9px;height:31.3px"></div>
<div class="rowln" style="top:711.2px"></div>
<div class="t c dk" style="left:115px;top:688px">16</div>
<div class="t dk" style="left:154px;top:688px"><span class="cj">杭州口腔医院（</span>30<span class="cj">）</span></div>
<div class="t r dk" style="right:1112.8px;top:688px">¥300.00</div>
<div class="t r gy" style="right:1032.8px;top:688px">0.04%</div>
<div class="t r zr" style="right:936.9px;top:688px">¥0.00</div>
<div class="t r zr" style="right:840.9px;top:688px">¥0.00</div>
<div class="t r zr" style="right:744.9px;top:688px">¥0.00</div>
<div class="t r zr" style="right:648.9px;top:688px">¥0.00</div>
<div class="t r zr" style="right:552.9px;top:688px">¥0.00</div>
<div class="t r zr" style="right:456.9px;top:688px">¥0.00</div>
<div class="t r dk" style="right:360.9px;top:688px">¥300.00</div>
<div class="t r zr" style="right:264.9px;top:688px">¥0.00</div>
<div class="t r zr" style="right:168.9px;top:688px">¥0.00</div>
<div class="t r zr" style="right:72.9px;top:688px">¥0.00</div>
<div class="t r zr" style="right:-23.1px;top:688px">¥0.00</div>
<div class="hl" style="left:82.4px;width:1492px;top:824.6px"></div>
<div class="t c sm" style="left:115px;top:832px"><span class="cj">合计</span></div>
<div class="t r sm" style="right:1112.8px;top:832px">¥694,139.02</div>
<div class="t sm" style="left:554.3px;top:832px">¥47,942.92</div>
<div class="t sm" style="left:650.3px;top:832px">¥62,144.20</div>
<div class="t sm" style="left:746.3px;top:832px">¥99,445.50</div>
<div class="t sm" style="left:842.3px;top:832px">¥76,049.74</div>
<div class="t sm" style="left:938.3px;top:832px">¥66,121.74</div>
<div class="t sm" style="left:1034.3px;top:832px">¥81,752.60</div>
<div class="t sm" style="left:1130.3px;top:832px">¥136,031.92</div>
<div class="t sm" style="left:1226.3px;top:832px">¥56,821.90</div>
<div class="t sm" style="left:1322.3px;top:832px">¥64,544.30</div>
<div class="t sm" style="left:1418.3px;top:832px">¥3,284.20</div>
<div class="t zr" style="left:1514.3px;top:832px">¥0.00</div>
</div>
<div class="hl" style="left:67px;width:1524px;top:854.6px"></div>
<div class="vl" style="left:1573.6px;top:184px;height:670.6px"></div>
<div class="ft" style="left:83px;top:874px;font-size:11px;color:#8f96a3">总行数:</div>
<div class="ft" style="left:127.8px;top:874px;font-size:11.2px;color:#1f2b45;font-weight:bold">16</div>
<svg class="abs" style="left:1354.6px;top:880px" width="7.2" height="8" viewBox="0 0 3.6 4"><path d="M3 0.4 L1 2 L3 3.6" fill="none" stroke="#c0c4cc" stroke-width="0.5"/></svg>
<div class="box" style="left:1376.8px;top:874px;width:35px;height:19.2px"></div>
<div class="ft" style="left:1394.2px;top:874px;font-size:11px;color:#1f2b45;transform:translateX(-50%)">1</div>
<div class="ft" style="left:1423px;top:874px;font-size:11px;color:#1f2b45">/</div>
<div class="ft" style="left:1440px;top:874px;font-size:11px;color:#1f2b45">1</div>
<svg class="abs" style="left:1462px;top:880px" width="7.2" height="8" viewBox="0 0 3.6 4"><path d="M0.6 0.4 L2.6 2 L0.6 3.6" fill="none" stroke="#c0c4cc" stroke-width="0.5"/></svg>
<div class="box" style="left:1487px;top:870.8px;width:88px;height:25.2px"></div>
<div class="ft" style="left:1496.8px;top:874px;font-size:10.8px;color:#1f2b45">50 条/页</div>
<svg class="abs" style="left:1558px;top:882px" width="8" height="6" viewBox="0 0 4 3"><path d="M0.3 0.5 L2 2.3 L3.7 0.5" fill="none" stroke="#b5bac3" stroke-width="0.5"/></svg>

</div></body></html>
